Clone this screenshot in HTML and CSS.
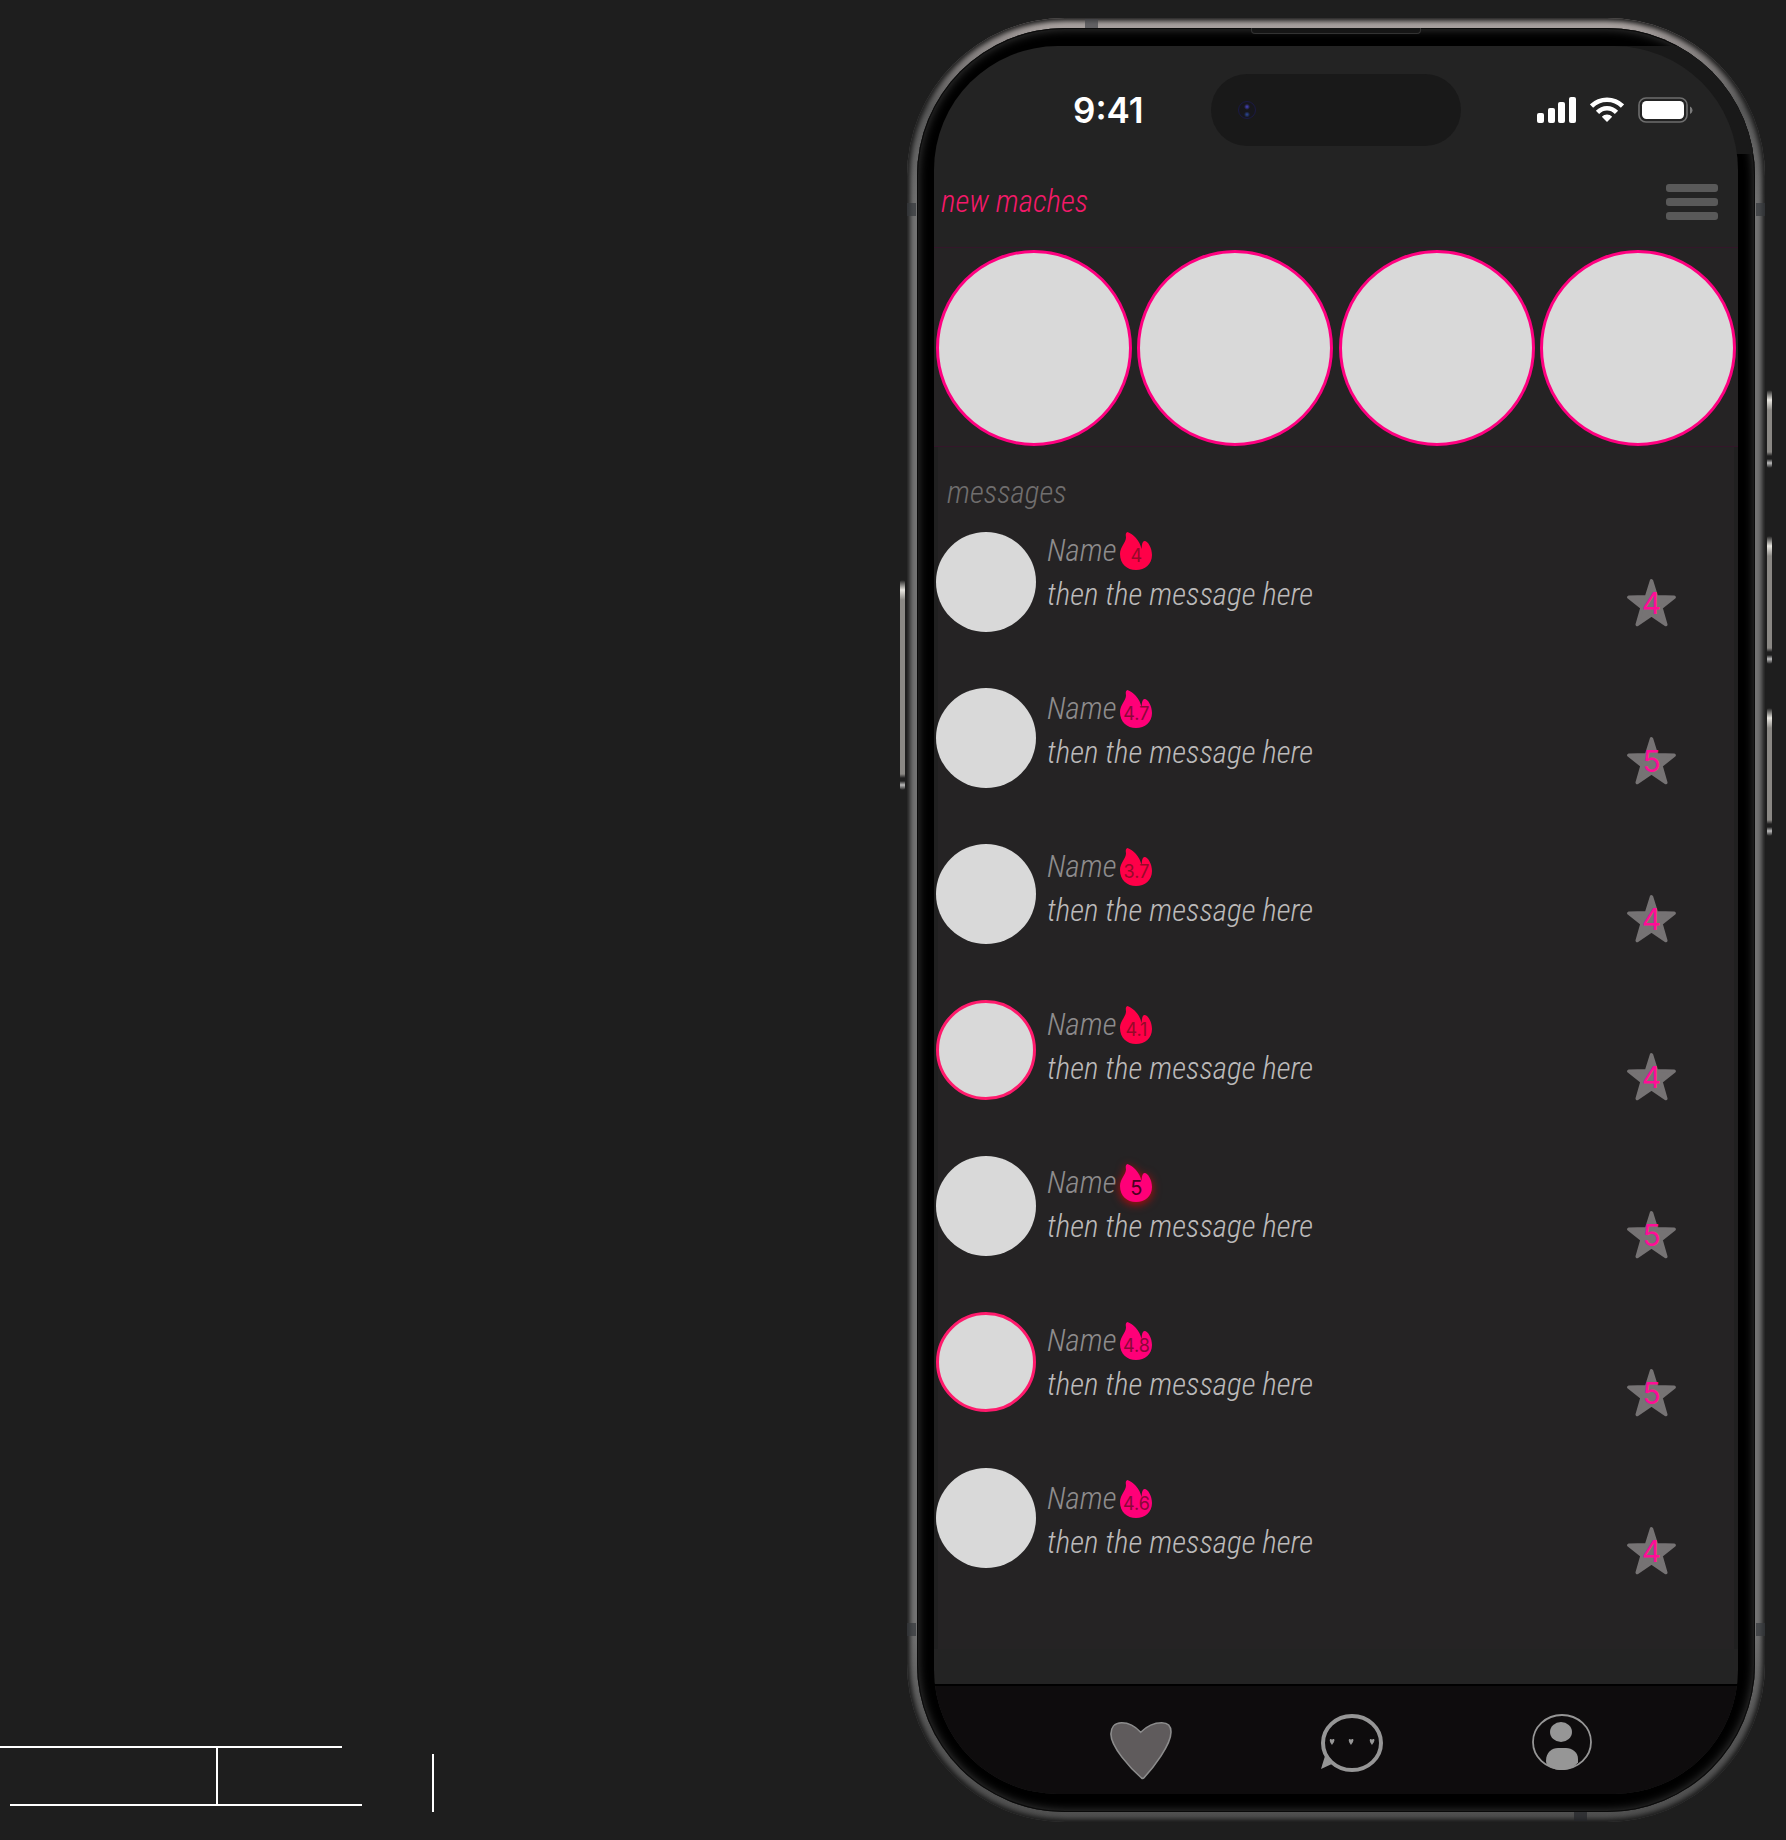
FILE: index.html
```html
<!DOCTYPE html>
<html lang="en">
<head>
<meta charset="utf-8">
<meta name="viewport" content="width=device-width, initial-scale=1">
<title>Messages</title>
<link rel="stylesheet" href="styles.css">
</head>
<body>
<svg class="defs" width="0" height="0" aria-hidden="true">
  <symbol id="flame" viewBox="0 0 32 38"><path d="M7.500 0C13 2 20 8.500 21.500 17C22 13 22 9.500 24.500 9C28 9 32 16 32 23C32 32 25 38 16 38C7 38 0 32 0 22C0 15 6 10.500 6 5.500C6 3.500 5 1 7.500 0Z"/></symbol>
  <symbol id="star" viewBox="0 0 49 48"><path d="M24.500 1.800L29.500 17.800L47.200 18.200L34 28.700L38.800 45.500L24.500 35.900L10.200 45.500L15 28.700L1.800 18.200L19.500 17.800Z" stroke-width="3.400" stroke-linejoin="round"/></symbol>
</svg>
<div class="board">
  <svg class="sketch" viewBox="0 0 434 66" aria-hidden="true">
    <path d="M0 1H342M217 0V60M10 59H362M433 8V66"/>
  </svg>

  <div class="phone">
    <span class="side side--left"></span>
    <span class="side side--right side--action"></span>
    <span class="side side--right side--up"></span>
    <span class="side side--right side--down"></span>
    <span class="band band--top"></span>
    <span class="band band--bottom"></span>
    <span class="band band--sides band--upper"></span>
    <span class="band band--sides band--lower"></span>
    <div class="bezel">
      <span class="speaker"></span>
      <div class="screen">
        <div class="status">
          <time class="clock">9:41</time>
          <div class="island"><span class="camera"></span></div>
          <div class="signals">
            <svg width="39" height="26" viewBox="0 0 39 26" fill="#fff" aria-hidden="true"><rect y="16" width="7" height="10" rx="2"/><rect x="11" y="11" width="7" height="15" rx="2"/><rect x="21" y="5" width="7" height="21" rx="2"/><rect x="32" width="7" height="26" rx="2"/></svg>
            <svg width="34" height="26" viewBox="0 0 34 26" fill="none" stroke="#fff" aria-hidden="true"><path d="M1.500 9C10 .6 24 .6 32.500 9" stroke-width="4.600"/><path d="M7.500 15.300C13 9.800 21 9.800 26.500 15.300" stroke-width="4.600"/><path d="M11.800 19.700C15 16.600 19 16.600 22.200 19.700L17 25Z" fill="#fff" stroke="none"/></svg>
            <svg width="55" height="26" viewBox="0 0 55 26" aria-hidden="true"><rect x="1" y="1" width="48" height="24" rx="7" fill="none" stroke="#6e6e6e" stroke-width="1.600"/><rect x="4" y="4" width="42" height="18" rx="4.500" fill="#fff"/><path d="M52 9.500C55.300 11 55.300 15.500 52 17Z" fill="#7a7a7a"/></svg>
          </div>
        </div>

        <header class="top">
          <h1 class="heading heading--matches">new maches</h1>
          <button class="menu" type="button" aria-label="Menu"><span></span><span></span><span></span></button>
        </header>

        <section class="matches" aria-label="New matches">
          <span class="match"></span>
          <span class="match"></span>
          <span class="match"></span>
          <span class="match"></span>
        </section>

        <main class="messages">
          <h2 class="heading heading--messages">messages</h2>
          <div class="inbox">
            <div class="avatars">
              <span class="avatar"></span>
              <span class="avatar"></span>
              <span class="avatar"></span>
              <span class="avatar avatar--ring"></span>
              <span class="avatar"></span>
              <span class="avatar avatar--ring"></span>
              <span class="avatar"></span>
            </div>
            <ul class="threads">
              <li class="thread">
                <div><div class="who">Name <span class="heat heat--red"><svg><use href="#flame"/></svg><b>4</b></span></div><p class="text">then the message here</p></div>
                <span class="rating"><svg><use href="#star"/></svg><b>4</b></span>
              </li>
              <li class="thread">
                <div><div class="who">Name <span class="heat"><svg><use href="#flame"/></svg><b>4.7</b></span></div><p class="text">then the message here</p></div>
                <span class="rating"><svg><use href="#star"/></svg><b>5</b></span>
              </li>
              <li class="thread">
                <div><div class="who">Name <span class="heat heat--red"><svg><use href="#flame"/></svg><b>3.7</b></span></div><p class="text">then the message here</p></div>
                <span class="rating"><svg><use href="#star"/></svg><b>4</b></span>
              </li>
              <li class="thread">
                <div><div class="who">Name <span class="heat heat--red"><svg><use href="#flame"/></svg><b>4.1</b></span></div><p class="text">then the message here</p></div>
                <span class="rating"><svg><use href="#star"/></svg><b>4</b></span>
              </li>
              <li class="thread">
                <div><div class="who">Name <span class="heat heat--glow"><svg><use href="#flame"/></svg><b>5</b></span></div><p class="text">then the message here</p></div>
                <span class="rating"><svg><use href="#star"/></svg><b>5</b></span>
              </li>
              <li class="thread">
                <div><div class="who">Name <span class="heat"><svg><use href="#flame"/></svg><b>4.8</b></span></div><p class="text">then the message here</p></div>
                <span class="rating"><svg><use href="#star"/></svg><b>5</b></span>
              </li>
              <li class="thread">
                <div><div class="who">Name <span class="heat"><svg><use href="#flame"/></svg><b>4.6</b></span></div><p class="text">then the message here</p></div>
                <span class="rating"><svg><use href="#star"/></svg><b>4</b></span>
              </li>
            </ul>
          </div>
        </main>

        <nav class="tabs" aria-label="Main">
          <button class="tab" type="button" aria-label="Likes">
            <svg width="62" height="66" viewBox="0 0 62 66"><path d="M30.700 18.300C24 11 17 8.800 11.700 8.800C4 8.800.9 14 .9 20C1 33 20 54 31.500 64C32.500 64.700 33.300 64.500 34 63.700C43 54 61 31 61 18C61 12 58 8.800 51.700 8.800C44 8.800 36 13 30.700 18.300Z" fill="#5f5b5c" stroke="#8c8c8c" stroke-width="1.600"/></svg>
          </button>
          <button class="tab" type="button" aria-label="Chats">
            <svg width="62" height="66" viewBox="0 0 62 66"><path d="M0 55L4.600 40L13 49Z" fill="#969696"/><ellipse cx="31" cy="29" rx="29" ry="27" fill="#0e0c0d" stroke="#969696" stroke-width="4"/><g fill="#969696"><path id="h" d="M11 31C8 27 8.500 25 9.700 25C10.500 25 11 25.700 11 26.200C11 25.700 11.500 25 12.400 25C14 25 14 27 11 31Z"/><use href="#h" x="19"/><use href="#h" x="40"/></g></svg>
          </button>
          <button class="tab" type="button" aria-label="Profile">
            <svg width="62" height="66" viewBox="0 0 62 66"><ellipse cx="30" cy="28" rx="29" ry="27" fill="none" stroke="#969696" stroke-width="1.800"/><ellipse cx="29" cy="18" rx="11" ry="10" fill="#969696"/><path d="M14 47C14 38 20 34 26 34H34C40 34 46 38 46 45V48.500C42 53.500 36 56 30 56C24 56 18 54 14.500 50.500Z" fill="#969696"/></svg>
          </button>
        </nav>
      </div>
    </div>
  </div>
</div>
</body>
</html>
```

FILE: styles.css
```css
* { box-sizing: border-box; }

body {
  margin: 0;
  background: #1e1e1e;
  color: #ababab;
  font-family: "Roboto Condensed", Roboto, "Liberation Sans", sans-serif;
}

button { padding: 0; border: 0; background: none; cursor: pointer; }
b { font-weight: 400; }
.defs { position: absolute; }

/* canvas: loose sketch lines on the left, device on the right */
.board {
  display: grid;
  grid-template-columns: minmax(0, 1fr) minmax(0, 858px);
  min-height: 100vh;
  padding: 18px 21px 17px 0;
}

.sketch {
  align-self: end;
  width: 434px;
  max-width: 100%;
  margin-bottom: 11px;
  fill: none;
  stroke: #fff;
  stroke-width: 2;
}

/* device */
.phone {
  position: relative;
  align-self: start;
  padding: 10px;
  border-radius: 158px;
  background: linear-gradient(#b5adab, #958f8e 20px, #5a5a5a 90px, #747474 200px, #747474 calc(100% - 200px), #555 calc(100% - 90px), #505050);
  box-shadow: inset 0 0 5px 3px #1a1a1a;
}

.bezel {
  position: relative;
  padding: 18px 17px;
  border-radius: 148px;
  background: #000;
  box-shadow: inset 0 0 0 1px #0a0a0a, inset 0 0 10px 2px #333;
  overflow: hidden;
}

/* lighter glass beside the status bar */
.bezel::before {
  content: "";
  position: absolute;
  top: 18px;
  right: 0;
  width: 140px;
  height: 108px;
  background: #191919;
}

.speaker {
  position: absolute;
  top: 0;
  left: 50%;
  width: 170px;
  height: 6px;
  margin-left: -85px;
  border: 1px solid #333;
  border-top: 0;
  border-radius: 0 0 4px 4px;
  background: #161616;
}

.side {
  position: absolute;
  width: 5px;
  border-radius: 2px;
  background: linear-gradient(#1e1e1e, #e8e6e0 10px, #8a8884 20px, #8a8884 calc(100% - 16px), #1e1e1e calc(100% - 12px), #1e1e1e calc(100% - 9px), #bbb calc(100% - 5px), #1e1e1e);
}
.side--left { left: -7px; top: 562px; height: 210px; }
.side--right { right: -7px; }
.side--action { top: 372px; height: 78px; }
.side--up { top: 518px; height: 128px; }
.side--down { top: 690px; height: 128px; }

.band { position: absolute; opacity: .7; }
.band--top, .band--bottom { width: 13px; height: 9px; background: #44464a; }
.band--top { top: 1px; left: 178px; }
.band--bottom { bottom: 1px; right: 178px; background: #24252a; }
.band--sides { left: 0; right: 0; height: 13px; border: solid #35383c; border-width: 0 9px; }
.band--upper { top: 185px; }
.band--lower { bottom: 186px; }

.screen {
  position: relative;
  border-radius: 124px;
  background: #232323;
  overflow: hidden;
}

/* status bar */
.status {
  display: grid;
  grid-template-columns: 1fr 250px 1fr;
  align-items: center;
  padding: 28px 0 8px;
}
.clock {
  padding-left: 139px;
  color: #fff;
  font: 600 35px/40px Inter, "Liberation Sans", sans-serif;
}
.island {
  display: flex;
  align-items: center;
  height: 72px;
  padding-left: 27px;
  border-radius: 36px;
  background: #191919;
}
.camera {
  width: 18px;
  height: 18px;
  border: 1px solid #1b1a45;
  border-radius: 50%;
  background:
    radial-gradient(circle at 50% 30%, #4745c8 0, transparent 3px),
    radial-gradient(circle at 50% 78%, #2c4aa0 0, transparent 3px),
    #17171c;
}
.signals {
  display: flex;
  justify-content: flex-end;
  gap: 14px;
  padding-right: 45px;
}
.signals svg { flex: none; }

/* header */
.top {
  display: flex;
  align-items: center;
  justify-content: space-between;
  padding: 26px 20px 23px 7px;
}
.heading {
  margin: 0;
  font-size: 31px;
  line-height: 44px;
  font-style: italic;
  font-weight: 300;
}
.heading--matches { color: #f5196a; }
.heading--messages { padding-left: 13px; color: #706e6e; }
.menu { display: grid; gap: 6px; width: 52px; }
.menu span { height: 8px; border-radius: 3px; background: #595959; }

/* new matches */
.matches {
  display: flex;
  justify-content: space-between;
  padding: 2px 2px 0;
  border: solid #34162a;
  border-width: 1px 0;
  background: #252324;
}
.match {
  width: 196px;
  aspect-ratio: 1;
  border: 3px solid #ff0080;
  border-radius: 50%;
  background: #d9d9d9;
}

/* messages */
.messages {
  padding: 24px 0 74px;
  background: linear-gradient(90deg, #202020 4px, #252324 4px, #252324 calc(100% - 4px), #202020 calc(100% - 4px));
}
.inbox {
  display: grid;
  grid-template-columns: 100px minmax(0, 1fr);
  gap: 11px;
  padding: 14px 62px 0 2px;
}
.avatars {
  display: flex;
  flex-direction: column;
  gap: 56px;
  padding-top: 3px;
}
.avatar {
  width: 100px;
  height: 100px;
  border-radius: 50%;
  background: #d9d9d9;
}
.avatar--ring { border: 3px solid #ff1a6c; }

.threads {
  display: flex;
  flex-direction: column;
  gap: 60px;
  margin: 0;
  padding: 0;
  list-style: none;
}
.thread {
  display: flex;
  align-items: flex-start;
  justify-content: space-between;
  height: 98px;
  font-size: 31px;
  line-height: 44px;
  font-style: italic;
  font-weight: 300;
}
.who { display: flex; align-items: center; gap: 4px; color: #8e8c8d; }
.text { margin: 0; color: #bcbaba; }

.heat, .rating {
  display: grid;
  font-family: Inter, "Liberation Sans", sans-serif;
  font-style: normal;
  text-align: center;
}
.heat > *, .rating > * { grid-area: 1 / 1; }
.heat {
  width: 32px;
  justify-content: center;
  color: #8a0838;
  font-size: 18px;
  line-height: 28px;
}
.heat svg { width: 32px; height: 38px; fill: #ff0078; }
.heat b { padding-top: 10px; }
.heat--red { color: #960a28; }
.heat--red svg { fill: #ff0048; }
.heat--glow { color: #4c0020; font-size: 20px; }
.heat--glow svg { overflow: visible; filter: drop-shadow(0 2px 5px #ff0000b0); }
.heat--glow b { z-index: 1; }

.rating {
  align-self: flex-end;
  color: #ff0d96;
  font-size: 30px;
  line-height: 48px;
}
.rating svg { width: 49px; height: 48px; fill: #767374; stroke: #767374; }

/* tab bar */
.tabs {
  display: flex;
  justify-content: center;
  gap: 149px;
  margin-top: 35px;
  padding: 28px 0 14px 32px;
  border-top: 2px solid #000;
  background: #0e0c0d;
}
.tab svg { display: block; }
```
